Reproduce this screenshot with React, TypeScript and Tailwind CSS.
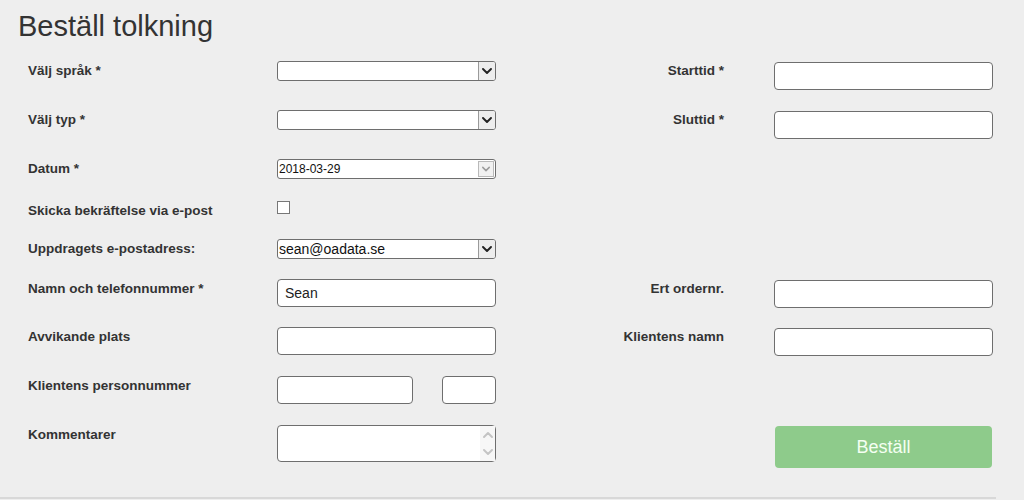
import React from 'react';

const Chevron = ({ color = '#222', w = 10 }: { color?: string; w?: number }) => (
  <svg width={w} height={6} viewBox="0 0 10 6" fill="none">
    <path d="M1 1l4 4 4-4" stroke={color} strokeWidth={1.9} strokeLinecap="round" strokeLinejoin="round" />
  </svg>
);

const Label: React.FC<{ children: React.ReactNode; right?: boolean }> = ({ children, right }) => (
  <div
    className={`text-[13.5px] font-bold leading-[20px] text-[#333] ${right ? 'pr-[50px] text-right' : ''}`}
  >
    {children}
  </div>
);

const FakeSelect: React.FC<{ value?: string }> = ({ value }) => (
  <div className="flex h-[20px] w-[219px] overflow-hidden rounded-[3px] border border-[#6e6e6e] bg-white">
    <span className="flex-1 truncate pl-px text-[14px] leading-[18px] text-[#111]">{value}</span>
    <span className="flex w-[17px] items-center justify-center border-l border-[#9a9a9a] bg-[#ededed]">
      <Chevron />
    </span>
  </div>
);

const DateInput: React.FC<{ value: string }> = ({ value }) => (
  <div className="flex h-[20px] w-[219px] overflow-hidden rounded-[3px] border border-[#6e6e6e] bg-white">
    <span className="flex-1 pl-px text-[12px] leading-[18px] text-[#111]">{value}</span>
    <span className="my-px mr-px flex w-[16px] items-center justify-center border border-[#b9b9b9] bg-[#f1f1f1]">
      <Chevron color="#9d9d9d" w={8} />
    </span>
  </div>
);

const TextInput: React.FC<{ value?: string; w?: string; shift?: boolean }> = ({ value, w = 'w-[219px]', shift }) => (
  <div
    className={`flex h-[28px] ${w} items-center rounded-[4px] border border-[#6e6e6e] bg-white px-[7px] text-[14px] text-[#222] ${
      shift ? 'mt-px' : ''
    }`}
  >
    {value}
  </div>
);

export default function App() {
  return (
    <div className="h-[500px] w-[1024px] overflow-hidden bg-[#eeeeee] font-['Liberation_Sans',Arial,sans-serif]">
      <h1 className="pl-[18px] pt-[9px] text-[29px] font-normal leading-[34px] text-[#333]">Beställ tolkning</h1>

      <div className="mt-[18px] grid grid-cols-[249px_219px_278px_219px] grid-rows-[49px_49px_42px_38px_40px_48px_49px_49px_72px] pl-[28px]">
        {/* row 1 */}
        <Label>Välj språk *</Label>
        <FakeSelect />
        <Label right>Starttid *</Label>
        <TextInput shift />

        {/* row 2 */}
        <Label>Välj typ *</Label>
        <FakeSelect />
        <Label right>Sluttid *</Label>
        <TextInput shift />

        {/* row 3 */}
        <Label>Datum *</Label>
        <DateInput value="2018-03-29" />
        <div />
        <div />

        {/* row 4 */}
        <Label>Skicka bekräftelse via e-post</Label>
        <div>
          <div className="h-[13px] w-[13px] border border-[#777] bg-white" />
        </div>
        <div />
        <div />

        {/* row 5 */}
        <Label>Uppdragets e-postadress:</Label>
        <FakeSelect value="sean@oadata.se" />
        <div />
        <div />

        {/* row 6 */}
        <Label>Namn och telefonnummer *</Label>
        <TextInput value="Sean" />
        <Label right>Ert ordernr.</Label>
        <TextInput shift />

        {/* row 7 */}
        <Label>Avvikande plats</Label>
        <TextInput />
        <Label right>Klientens namn</Label>
        <TextInput shift />

        {/* row 8 */}
        <Label>Klientens personnummer</Label>
        <div className="flex justify-between">
          <TextInput w="w-[136px]" />
          <TextInput w="w-[54px]" />
        </div>
        <div />
        <div />

        {/* row 9 */}
        <Label>Kommentarer</Label>
        <div>
          <div className="flex h-[37px] w-[219px] justify-end rounded-[4px] border border-[#6e6e6e] bg-white">
            <div className="flex w-[15px] flex-col items-center justify-between bg-[#f7f7f7] py-[6px]">
              <span className="rotate-180">
                <Chevron color="#c4c4c4" />
              </span>
              <Chevron color="#c4c4c4" />
            </div>
          </div>
        </div>
        <div />
        <div>
          <button className="ml-px mt-px flex h-[42px] w-[217px] items-center justify-center rounded-[4px] bg-[#8ecb8b] text-[18px] text-[#f4fff2]">
            Beställ
          </button>
        </div>
      </div>

      <div className="h-[2px] w-[996px] bg-[#d8d8d8]" />
    </div>
  );
}
